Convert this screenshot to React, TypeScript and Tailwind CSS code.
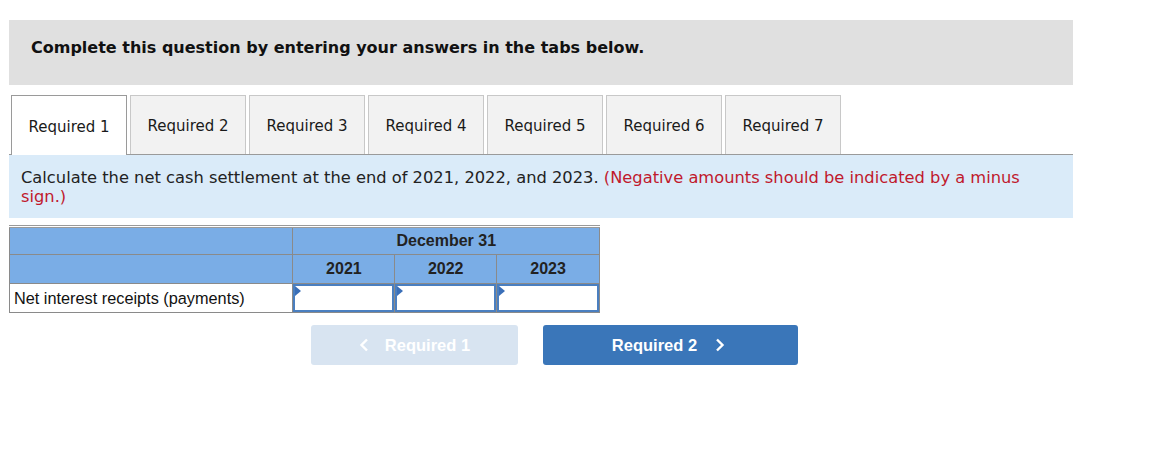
import React from "react";

const tabs = ["Required 1", "Required 2", "Required 3", "Required 4", "Required 5", "Required 6", "Required 7"];

function InputCell() {
  return (
    <td className="p-0 border-r border-b border-[#8a8a8a]">
      <div className="relative h-[28px] w-full border-2 border-[#4a7fc0] bg-white">
        <div className="absolute left-0 top-0 h-0 w-0 border-t-[5px] border-b-[5px] border-l-[6px] border-t-transparent border-b-transparent border-l-[#3a6fb8]" />
      </div>
    </td>
  );
}

export default function App() {
  return (
    <div className="w-[1150px] h-[451px] bg-white pt-[20px] pl-[9px]" style={{ fontFamily: '"DejaVu Sans", Verdana, sans-serif' }}>
      <div className="w-[1064px] h-[65px] bg-[#e0e0e0] pl-[22px] pt-[16px]">
        <span className="text-[16px] font-bold text-[#111]">Complete this question by entering your answers in the tabs below.</span>
      </div>
      <div className="mt-[10px] w-[1064px] flex border-b border-[#9a9a9a] pl-[2px] gap-[3px]">
        {tabs.map((t, i) => (
          <div
            key={t}
            className={`w-[116px] flex items-center justify-center pt-[3px] text-[15px] text-[#1a1a1a] ${
              i === 0 ? "bg-white border border-b-0 border-[#9a9a9a] -mb-px h-[60px]" : "bg-[#f2f2f2] border border-b-0 border-[#c8c8c8] h-[59px]"
            }`}
          >
            {t}
          </div>
        ))}
      </div>
      <div className="w-[1064px] h-[63px] bg-[#daebf9] pl-[12px] pr-[40px] pt-[13px] text-[16.3px] leading-[19px] text-[#222]">
        <p>
          Calculate the net cash settlement at the end of 2021, 2022, and 2023.{" "}
          <span className="text-[#c0192d]">(Negative amounts should be indicated by a minus sign.)</span>
        </p>
      </div>
      <table
        className="mt-[7px] border-collapse border-t-[3px] border-double border-[#9a9a9a] w-[591px]"
        style={{ fontFamily: '"Liberation Sans", Arial, sans-serif' }}
      >
        <tbody>
          <tr className="bg-[#7aade6] h-[28px]">
            <td className="w-[284px] border-l border-b border-r border-[#8a8a8a]"></td>
            <td colSpan={3} className="text-center font-bold text-[16px] text-[#222] border-b border-r border-[#8a8a8a]">
              December 31
            </td>
          </tr>
          <tr className="bg-[#7aade6] h-[29px]">
            <td className="border-l border-b border-r border-[#8a8a8a]"></td>
            <td className="w-[102px] text-center font-bold text-[16px] text-[#222] border-b border-r border-[#8a8a8a]">2021</td>
            <td className="w-[102px] text-center font-bold text-[16px] text-[#222] border-b border-r border-[#8a8a8a]">2022</td>
            <td className="w-[103px] text-center font-bold text-[16px] text-[#222] border-b border-r border-[#8a8a8a]">2023</td>
          </tr>
          <tr className="h-[29px]">
            <td className="pl-[4px] text-[16.3px] text-[#111] border-l border-b border-r border-[#8a8a8a]">Net interest receipts (payments)</td>
            <InputCell />
            <InputCell />
            <InputCell />
          </tr>
        </tbody>
      </table>
      <div className="mt-[12px] flex pl-[302px] gap-[25px]" style={{ fontFamily: '"Liberation Sans", Arial, sans-serif' }}>
        <div className="w-[207px] h-[40px] rounded-[3px] bg-[#d8e4f1] flex items-center justify-center gap-[16px] text-white font-bold text-[16.5px]">
          <svg width="10" height="14" viewBox="0 0 10 14"><path d="M8 1.5 L2.5 7 L8 12.5" stroke="white" strokeWidth="2.4" fill="none" /></svg>
          <span>Required 1</span>
        </div>
        <div className="w-[255px] h-[40px] rounded-[3px] bg-[#3a76b9] flex items-center justify-center gap-[18px] pr-[4px] text-white font-bold text-[16.5px]">
          <span>Required 2</span>
          <svg width="10" height="14" viewBox="0 0 10 14"><path d="M2 1.5 L7.5 7 L2 12.5" stroke="white" strokeWidth="2.4" fill="none" /></svg>
        </div>
      </div>
    </div>
  );
}
